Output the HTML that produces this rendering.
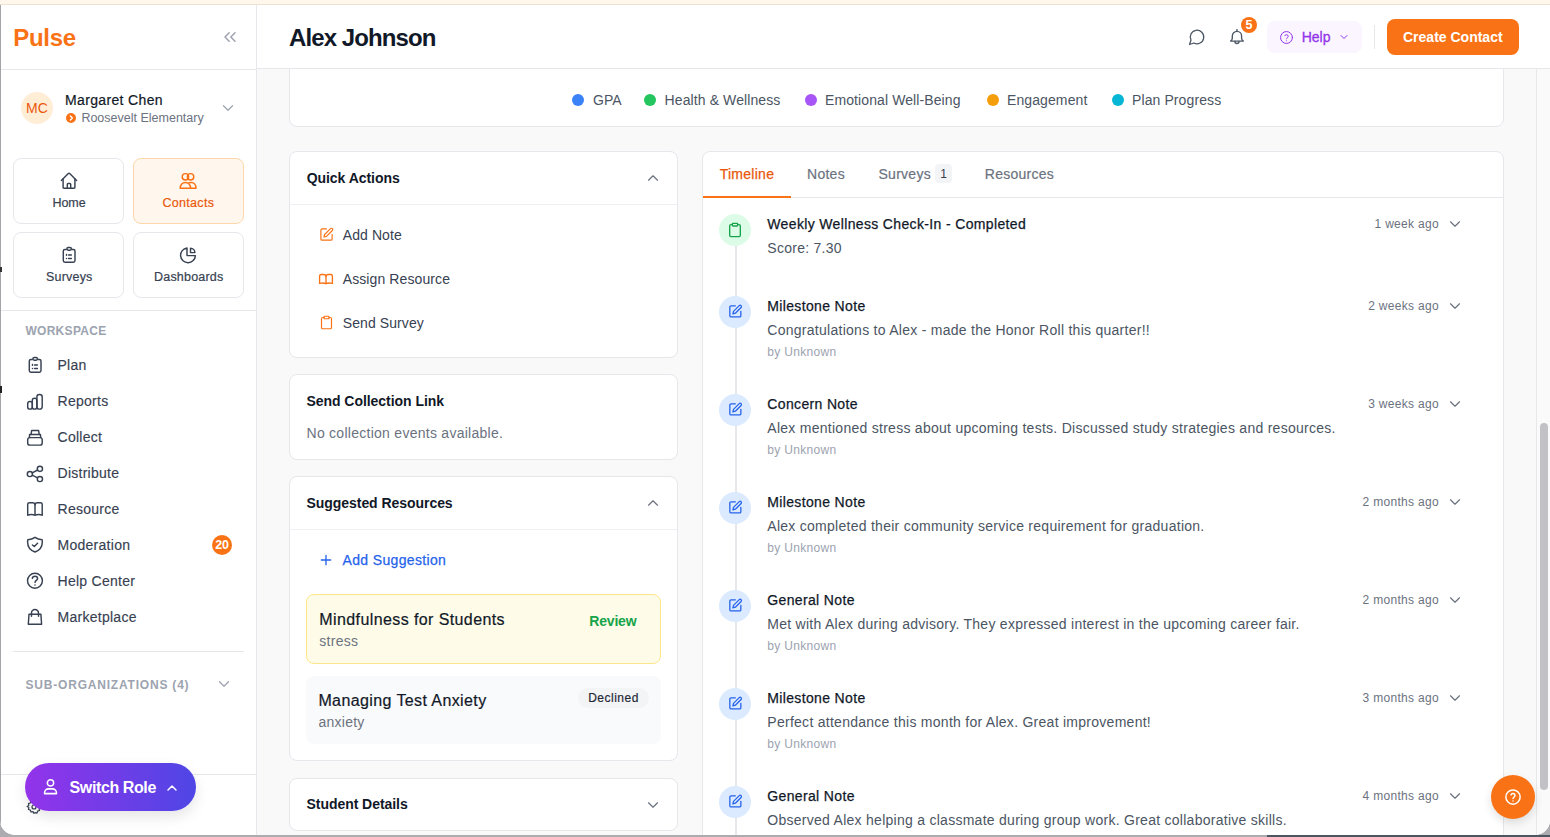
<!DOCTYPE html>
<html><head><meta charset="utf-8">
<style>
*{box-sizing:border-box;margin:0;padding:0}
html,body{width:1550px;height:837px;overflow:hidden}
body{background:#acacb0;font-family:"Liberation Sans",sans-serif;position:relative;color:#111827}
.a{position:absolute}
.t{position:absolute;white-space:nowrap;line-height:1}
svg{position:absolute;fill:none;stroke:currentColor;stroke-linecap:round;stroke-linejoin:round;overflow:visible}
#app{position:absolute;left:0;top:0;width:1550px;height:835px;background:#fff;border-radius:0 0 15px 15px;overflow:hidden}
.card{position:absolute;background:#fff;border:1px solid #e5e7eb;border-radius:8px}
.tile{position:absolute;border:1px solid #e5e7eb;border-radius:8px;background:#fff;width:111px;height:66px}
.circ{position:absolute;width:32px;height:32px;border-radius:16px;background:#dbeafe;left:719px}
</style></head><body>
<div id="app">
<div class="a" style="left:0px;top:0px;width:1550px;height:4px;background:#fff6ec;"></div>
<div class="a" style="left:0px;top:4px;width:1550px;height:1px;background:#ebe3d1;"></div>
<div class="a" style="left:257px;top:69px;width:1293px;height:766px;background:#f9f9fa;"></div>
<div class="card" style="left:289px;top:20px;width:1215px;height:107px"></div>
<div class="a" style="left:572px;top:94px;width:12px;height:12px;background:#3b82f6;border-radius:6px"></div>
<div class="t" style="left:592.9px;top:92.65px;font-size:14px;color:#4b5563;letter-spacing:0.1px;">GPA</div>
<div class="a" style="left:644px;top:94px;width:12px;height:12px;background:#22c55e;border-radius:6px"></div>
<div class="t" style="left:664.6px;top:92.65px;font-size:14px;color:#4b5563;letter-spacing:0.1px;">Health &amp; Wellness</div>
<div class="a" style="left:805px;top:94px;width:12px;height:12px;background:#a855f7;border-radius:6px"></div>
<div class="t" style="left:825px;top:92.65px;font-size:14px;color:#4b5563;letter-spacing:0.1px;">Emotional Well-Being</div>
<div class="a" style="left:987px;top:94px;width:12px;height:12px;background:#f59e0b;border-radius:6px"></div>
<div class="t" style="left:1007px;top:92.65px;font-size:14px;color:#4b5563;letter-spacing:0.1px;">Engagement</div>
<div class="a" style="left:1112px;top:94px;width:12px;height:12px;background:#06b6d4;border-radius:6px"></div>
<div class="t" style="left:1132px;top:92.65px;font-size:14px;color:#4b5563;letter-spacing:0.1px;">Plan Progress</div>
<div class="card" style="left:289px;top:151px;width:389px;height:207px"></div>
<div class="a" style="left:290px;top:204px;width:387px;height:1px;background:#eef0f3;"></div>
<div class="t" style="left:306.7px;top:170.95px;font-size:14px;color:#111827;font-weight:bold;letter-spacing:-0.05px;">Quick Actions</div>
<svg style="left:644.2px;top:168.5px;width:18px;height:18px;color:#6b7280;" viewBox="0 0 24 24" stroke-width="1.55"><path d="m18 15-6-6-6 6"/></svg>
<svg style="left:318.5px;top:226.8px;width:15px;height:15px;color:#f97316;" viewBox="0 0 24 24" stroke-width="1.9"><path d="M12 3H5a2 2 0 0 0-2 2v14a2 2 0 0 0 2 2h14a2 2 0 0 0 2-2v-7"/><path d="M18.375 2.625a2.121 2.121 0 1 1 3 3L12 15l-4 1 1-4Z"/></svg>
<div class="t" style="left:342.7px;top:228.35px;font-size:14px;color:#374151;letter-spacing:0.1px;">Add Note</div>
<svg style="left:310px;top:266px;width:32px;height:26px;color:#f97316" viewBox="310 266 32 26" stroke-width="1.35"><path d="M319.6 283.4V276C319.6 275.1 320.2 274.5 321.1 274.5H323.6C325 274.5 326 275.4 326 276.6V283.6"/><path d="M332.4 283.4V276C332.4 275.1 331.8 274.5 330.9 274.5H328.4C327 274.5 326 275.4 326 276.6"/><path d="M319.6 283.4C321.6 282.9 324.3 282.9 326 283.6C327.7 282.9 330.4 282.9 332.4 283.4"/></svg>
<div class="t" style="left:342.7px;top:272.35px;font-size:14px;color:#374151;letter-spacing:0.1px;">Assign Resource</div>
<svg style="left:318.5px;top:315.3px;width:15px;height:15px;color:#f97316;" viewBox="0 0 24 24" stroke-width="1.9"><rect x="8" y="2" width="8" height="4" rx="1"/><path d="M16 4h2a2 2 0 0 1 2 2v14a2 2 0 0 1-2 2H6a2 2 0 0 1-2-2V6a2 2 0 0 1 2-2h2"/></svg>
<div class="t" style="left:342.7px;top:316.35px;font-size:14px;color:#374151;letter-spacing:0.1px;">Send Survey</div>
<div class="card" style="left:289px;top:374px;width:389px;height:86px"></div>
<div class="t" style="left:306.5px;top:393.75px;font-size:14px;color:#111827;font-weight:bold;letter-spacing:-0.05px;">Send Collection Link</div>
<div class="t" style="left:306.5px;top:426.45px;font-size:14px;color:#6b7280;letter-spacing:0.27px;">No collection events available.</div>
<div class="card" style="left:289px;top:476px;width:389px;height:284.5px"></div>
<div class="a" style="left:290px;top:529px;width:387px;height:1px;background:#eef0f3;"></div>
<div class="t" style="left:306.5px;top:496.05px;font-size:14px;color:#111827;font-weight:bold;letter-spacing:-0.05px;">Suggested Resources</div>
<svg style="left:644.2px;top:493.8px;width:18px;height:18px;color:#6b7280;" viewBox="0 0 24 24" stroke-width="1.55"><path d="m18 15-6-6-6 6"/></svg>
<svg style="left:318px;top:552px;width:16px;height:16px;color:#2563eb;" viewBox="0 0 24 24" stroke-width="2"><path d="M12 5v14M5 12h14"/></svg>
<div class="t" style="left:342.5px;top:553.45px;font-size:14px;color:#2563eb;letter-spacing:0.35px;-webkit-text-stroke:0.25px #2563eb;">Add Suggestion</div>
<div class="a" style="left:306px;top:594px;width:355px;height:70px;background:#fefce8;border-radius:8px;border:1px solid #fde68a"></div>
<div class="t" style="left:319.3px;top:611.96px;font-size:16px;color:#111827;letter-spacing:0.4px;-webkit-text-stroke:0.2px #111827;">Mindfulness for Students</div>
<div class="t" style="left:319.3px;top:634.15px;font-size:14px;color:#6b7280;letter-spacing:0.27px;">stress</div>
<div class="t" style="left:589.3px;top:614.15px;font-size:14px;color:#16a34a;font-weight:bold;letter-spacing:-0.2px;">Review</div>
<div class="a" style="left:306px;top:676px;width:355px;height:67.5px;background:#f9fafb;border-radius:8px"></div>
<div class="t" style="left:318.4px;top:693.26px;font-size:16px;color:#111827;letter-spacing:0.4px;-webkit-text-stroke:0.2px #111827;">Managing Test Anxiety</div>
<div class="t" style="left:318.4px;top:715.15px;font-size:14px;color:#6b7280;letter-spacing:0.27px;">anxiety</div>
<div class="a" style="left:578px;top:688px;width:71px;height:20px;background:#f3f4f6;border-radius:10px"></div>
<div class="t" style="left:578.0px;width:71px;text-align:center;top:692.14px;font-size:12px;color:#1f2937;letter-spacing:0.5px;-webkit-text-stroke:0.2px #1f2937;">Declined</div>
<div class="card" style="left:289px;top:777.5px;width:389px;height:53px"></div>
<div class="t" style="left:306.5px;top:796.55px;font-size:14px;color:#111827;font-weight:bold;letter-spacing:-0.05px;">Student Details</div>
<svg style="left:644.2px;top:795.5px;width:18px;height:18px;color:#6b7280;" viewBox="0 0 24 24" stroke-width="1.55"><path d="m6 9 6 6 6-6"/></svg>
<div class="card" style="left:702px;top:151px;width:802px;height:720px"></div>
<div class="a" style="left:703px;top:197px;width:800px;height:1px;background:#e5e7eb;"></div>
<div class="a" style="left:703px;top:196px;width:88px;height:2px;background:#f97316;"></div>
<div class="t" style="left:719.7px;top:166.95px;font-size:14px;color:#ea580c;letter-spacing:0.27px;-webkit-text-stroke:0.25px #ea580c;">Timeline</div>
<div class="t" style="left:807px;top:166.95px;font-size:14px;color:#6b7280;letter-spacing:0.27px;-webkit-text-stroke:0.2px #6b7280;">Notes</div>
<div class="t" style="left:878.5px;top:166.95px;font-size:14px;color:#6b7280;letter-spacing:0.27px;-webkit-text-stroke:0.2px #6b7280;">Surveys</div>
<div class="a" style="left:935px;top:164px;width:17px;height:19px;background:#f3f4f6;border-radius:4px"></div>
<div class="t" style="left:935.0px;width:17px;text-align:center;top:167.84px;font-size:12px;color:#374151;">1</div>
<div class="t" style="left:984.8px;top:166.95px;font-size:14px;color:#6b7280;letter-spacing:0.27px;-webkit-text-stroke:0.2px #6b7280;">Resources</div>
<div class="a" style="left:734.5px;top:246px;width:2px;height:600px;background:#e5e7eb;"></div>
<div class="circ" style="top:214px;background:#dcfce7"></div>
<svg style="left:727px;top:221.8px;width:16px;height:16px;color:#16a34a;" viewBox="0 0 24 24" stroke-width="2"><rect x="8" y="2" width="8" height="4" rx="1"/><path d="M16 4h2a2 2 0 0 1 2 2v14a2 2 0 0 1-2 2H6a2 2 0 0 1-2-2V6a2 2 0 0 1 2-2h2"/></svg>
<div class="t" style="left:767.3px;top:217.15px;font-size:14px;color:#111827;letter-spacing:0.35px;-webkit-text-stroke:0.25px #111827;">Weekly Wellness Check-In - Completed</div>
<div class="t" style="left:767.3px;top:241.15px;font-size:14px;color:#4b5563;letter-spacing:0.27px;">Score: 7.30</div>
<div class="t" style="right:111px;top:218.34px;font-size:12px;color:#6b7280;letter-spacing:0.31px;">1 week ago</div>
<svg style="left:1446px;top:215.2px;width:18px;height:18px;color:#6b7280;" viewBox="0 0 24 24" stroke-width="1.55"><path d="m6 9 6 6 6-6"/></svg>
<div class="circ" style="top:296px"></div>
<svg style="left:727.9px;top:304.2px;width:14.7px;height:14.7px;color:#2563eb;" viewBox="0 0 24 24" stroke-width="2.1"><path d="M12 3H5a2 2 0 0 0-2 2v14a2 2 0 0 0 2 2h14a2 2 0 0 0 2-2v-7"/><path d="M18.375 2.625a2.121 2.121 0 1 1 3 3L12 15l-4 1 1-4Z"/></svg>
<div class="t" style="left:767.3px;top:299.15px;font-size:14px;color:#111827;letter-spacing:0.35px;-webkit-text-stroke:0.25px #111827;">Milestone Note</div>
<div class="t" style="left:767.3px;top:323.15px;font-size:14px;color:#4b5563;letter-spacing:0.27px;">Congratulations to Alex - made the Honor Roll this quarter!!</div>
<div class="t" style="left:767.3px;top:345.84px;font-size:12px;color:#9ca3af;letter-spacing:0.31px;">by Unknown</div>
<div class="t" style="right:111px;top:300.34px;font-size:12px;color:#6b7280;letter-spacing:0.31px;">2 weeks ago</div>
<svg style="left:1446px;top:297.2px;width:18px;height:18px;color:#6b7280;" viewBox="0 0 24 24" stroke-width="1.55"><path d="m6 9 6 6 6-6"/></svg>
<div class="circ" style="top:394px"></div>
<svg style="left:727.9px;top:402.2px;width:14.7px;height:14.7px;color:#2563eb;" viewBox="0 0 24 24" stroke-width="2.1"><path d="M12 3H5a2 2 0 0 0-2 2v14a2 2 0 0 0 2 2h14a2 2 0 0 0 2-2v-7"/><path d="M18.375 2.625a2.121 2.121 0 1 1 3 3L12 15l-4 1 1-4Z"/></svg>
<div class="t" style="left:767.3px;top:397.15px;font-size:14px;color:#111827;letter-spacing:0.35px;-webkit-text-stroke:0.25px #111827;">Concern Note</div>
<div class="t" style="left:767.3px;top:421.15px;font-size:14px;color:#4b5563;letter-spacing:0.27px;">Alex mentioned stress about upcoming tests. Discussed study strategies and resources.</div>
<div class="t" style="left:767.3px;top:443.84px;font-size:12px;color:#9ca3af;letter-spacing:0.31px;">by Unknown</div>
<div class="t" style="right:111px;top:398.34px;font-size:12px;color:#6b7280;letter-spacing:0.31px;">3 weeks ago</div>
<svg style="left:1446px;top:395.2px;width:18px;height:18px;color:#6b7280;" viewBox="0 0 24 24" stroke-width="1.55"><path d="m6 9 6 6 6-6"/></svg>
<div class="circ" style="top:492px"></div>
<svg style="left:727.9px;top:500.2px;width:14.7px;height:14.7px;color:#2563eb;" viewBox="0 0 24 24" stroke-width="2.1"><path d="M12 3H5a2 2 0 0 0-2 2v14a2 2 0 0 0 2 2h14a2 2 0 0 0 2-2v-7"/><path d="M18.375 2.625a2.121 2.121 0 1 1 3 3L12 15l-4 1 1-4Z"/></svg>
<div class="t" style="left:767.3px;top:495.15px;font-size:14px;color:#111827;letter-spacing:0.35px;-webkit-text-stroke:0.25px #111827;">Milestone Note</div>
<div class="t" style="left:767.3px;top:519.15px;font-size:14px;color:#4b5563;letter-spacing:0.27px;">Alex completed their community service requirement for graduation.</div>
<div class="t" style="left:767.3px;top:541.84px;font-size:12px;color:#9ca3af;letter-spacing:0.31px;">by Unknown</div>
<div class="t" style="right:111px;top:496.34px;font-size:12px;color:#6b7280;letter-spacing:0.31px;">2 months ago</div>
<svg style="left:1446px;top:493.2px;width:18px;height:18px;color:#6b7280;" viewBox="0 0 24 24" stroke-width="1.55"><path d="m6 9 6 6 6-6"/></svg>
<div class="circ" style="top:590px"></div>
<svg style="left:727.9px;top:598.2px;width:14.7px;height:14.7px;color:#2563eb;" viewBox="0 0 24 24" stroke-width="2.1"><path d="M12 3H5a2 2 0 0 0-2 2v14a2 2 0 0 0 2 2h14a2 2 0 0 0 2-2v-7"/><path d="M18.375 2.625a2.121 2.121 0 1 1 3 3L12 15l-4 1 1-4Z"/></svg>
<div class="t" style="left:767.3px;top:593.15px;font-size:14px;color:#111827;letter-spacing:0.35px;-webkit-text-stroke:0.25px #111827;">General Note</div>
<div class="t" style="left:767.3px;top:617.15px;font-size:14px;color:#4b5563;letter-spacing:0.27px;">Met with Alex during advisory. They expressed interest in the upcoming career fair.</div>
<div class="t" style="left:767.3px;top:639.84px;font-size:12px;color:#9ca3af;letter-spacing:0.31px;">by Unknown</div>
<div class="t" style="right:111px;top:594.34px;font-size:12px;color:#6b7280;letter-spacing:0.31px;">2 months ago</div>
<svg style="left:1446px;top:591.2px;width:18px;height:18px;color:#6b7280;" viewBox="0 0 24 24" stroke-width="1.55"><path d="m6 9 6 6 6-6"/></svg>
<div class="circ" style="top:688px"></div>
<svg style="left:727.9px;top:696.2px;width:14.7px;height:14.7px;color:#2563eb;" viewBox="0 0 24 24" stroke-width="2.1"><path d="M12 3H5a2 2 0 0 0-2 2v14a2 2 0 0 0 2 2h14a2 2 0 0 0 2-2v-7"/><path d="M18.375 2.625a2.121 2.121 0 1 1 3 3L12 15l-4 1 1-4Z"/></svg>
<div class="t" style="left:767.3px;top:691.15px;font-size:14px;color:#111827;letter-spacing:0.35px;-webkit-text-stroke:0.25px #111827;">Milestone Note</div>
<div class="t" style="left:767.3px;top:715.15px;font-size:14px;color:#4b5563;letter-spacing:0.27px;">Perfect attendance this month for Alex. Great improvement!</div>
<div class="t" style="left:767.3px;top:737.84px;font-size:12px;color:#9ca3af;letter-spacing:0.31px;">by Unknown</div>
<div class="t" style="right:111px;top:692.34px;font-size:12px;color:#6b7280;letter-spacing:0.31px;">3 months ago</div>
<svg style="left:1446px;top:689.2px;width:18px;height:18px;color:#6b7280;" viewBox="0 0 24 24" stroke-width="1.55"><path d="m6 9 6 6 6-6"/></svg>
<div class="circ" style="top:786px"></div>
<svg style="left:727.9px;top:794.2px;width:14.7px;height:14.7px;color:#2563eb;" viewBox="0 0 24 24" stroke-width="2.1"><path d="M12 3H5a2 2 0 0 0-2 2v14a2 2 0 0 0 2 2h14a2 2 0 0 0 2-2v-7"/><path d="M18.375 2.625a2.121 2.121 0 1 1 3 3L12 15l-4 1 1-4Z"/></svg>
<div class="t" style="left:767.3px;top:789.15px;font-size:14px;color:#111827;letter-spacing:0.35px;-webkit-text-stroke:0.25px #111827;">General Note</div>
<div class="t" style="left:767.3px;top:813.15px;font-size:14px;color:#4b5563;letter-spacing:0.27px;">Observed Alex helping a classmate during group work. Great collaborative skills.</div>
<div class="t" style="left:767.3px;top:835.84px;font-size:12px;color:#9ca3af;letter-spacing:0.31px;">by Unknown</div>
<div class="t" style="right:111px;top:790.34px;font-size:12px;color:#6b7280;letter-spacing:0.31px;">4 months ago</div>
<svg style="left:1446px;top:787.2px;width:18px;height:18px;color:#6b7280;" viewBox="0 0 24 24" stroke-width="1.55"><path d="m6 9 6 6 6-6"/></svg>
<div class="a" style="left:1536px;top:69px;width:14px;height:766px;background:#fafafa;border-left:1px solid #e8e8ea"></div>
<div class="a" style="left:1540px;top:423px;width:8px;height:367px;background:#c2c2c6;border-radius:4px"></div>
<div class="a" style="left:1491px;top:775px;width:44px;height:44px;background:#f97316;border-radius:22px;box-shadow:0 4px 10px rgba(0,0,0,.12)"></div>
<svg style="left:1504px;top:788px;width:18px;height:18px;color:#fff;" viewBox="0 0 24 24" stroke-width="2"><circle cx="12" cy="12" r="9.5"/><path d="M9.3 9.2a2.8 2.8 0 0 1 5.4.9c0 1.9-2.7 2.4-2.7 3.9"/><path d="M12 17.3h.01"/></svg>
<div class="a" style="left:257px;top:5px;width:1293px;height:63px;background:#fff;"></div>
<div class="a" style="left:257px;top:68px;width:1293px;height:1px;background:#e5e7eb;"></div>
<div class="t" style="left:289px;top:26.48px;font-size:24px;color:#111827;font-weight:bold;letter-spacing:-0.9px;">Alex Johnson</div>
<svg style="left:1188px;top:27.9px;width:18px;height:18px;color:#4b5563;" viewBox="0 0 24 24" stroke-width="1.7"><path d="M7.9 20A9 9 0 1 0 4 16.1L2 22Z"/></svg>
<svg style="left:1180px;top:15px;width:80px;height:40px;color:#4b5563" viewBox="1180 15 80 40" stroke-width="1.35"><path d="M1232.3 38.3V36A4.65 4.65 0 0 1 1241.6 36V38.3C1241.6 39.5 1242.3 40.4 1243.3 41.1H1230.6C1231.6 40.4 1232.3 39.5 1232.3 38.3Z"/><path d="M1236.95 31.3V29.6"/><path d="M1234.9 41.4A2.05 2.05 0 0 0 1239 41.4"/></svg>
<div class="a" style="left:1241px;top:17px;width:16px;height:16px;background:#f97316;border-radius:8px"></div>
<div class="t" style="left:1241.0px;width:16px;text-align:center;top:18.62px;font-size:12.5px;color:#fff;font-weight:bold;">5</div>
<div class="a" style="left:1267px;top:21px;width:95px;height:32px;background:#faf5ff;border-radius:8px"></div>
<svg style="left:1279px;top:30px;width:15px;height:15px;color:#9333ea;" viewBox="0 0 24 24" stroke-width="1.6"><circle cx="12" cy="12" r="9.5"/><path d="M9.3 9.2a2.8 2.8 0 0 1 5.4.9c0 1.9-2.7 2.4-2.7 3.9"/><path d="M12 17.3h.01"/></svg>
<div class="t" style="left:1301.7px;top:30.15px;font-size:14px;color:#9333ea;-webkit-text-stroke:0.3px #9333ea;">Help</div>
<svg style="left:1338px;top:31px;width:12px;height:12px;color:#9333ea;" viewBox="0 0 24 24" stroke-width="2"><path d="m6 9 6 6 6-6"/></svg>
<div class="a" style="left:1374px;top:25px;width:1px;height:24px;background:#e5e7eb;"></div>
<div class="a" style="left:1387px;top:19px;width:132px;height:36px;background:#f97316;border-radius:8px"></div>
<div class="t" style="left:1403px;top:30.15px;font-size:14px;color:#fff;font-weight:bold;">Create Contact</div>
<div class="a" style="left:0px;top:5px;width:257px;height:830px;background:#fff;border-right:1px solid #e5e7eb"></div>
<div class="t" style="left:13.3px;top:25.68px;font-size:24px;color:#f97316;font-weight:bold;letter-spacing:-0.3px;">Pulse</div>
<svg style="left:219.6px;top:26.8px;width:20px;height:20px;color:#9ca3af;" viewBox="0 0 24 24" stroke-width="1.8"><path d="m11 17-5-5 5-5"/><path d="m18 17-5-5 5-5"/></svg>
<div class="a" style="left:0px;top:69px;width:256px;height:1px;background:#e5e7eb;"></div>
<div class="a" style="left:21px;top:92px;width:32px;height:32px;background:#ffedd5;border-radius:16px"></div>
<div class="t" style="left:21.0px;width:32px;text-align:center;top:100.95px;font-size:14px;color:#ea580c;">MC</div>
<div class="t" style="left:65px;top:93.15px;font-size:14px;color:#111827;letter-spacing:0.35px;-webkit-text-stroke:0.2px #111827;">Margaret Chen</div>
<div class="a" style="left:66px;top:113px;width:10px;height:10px;background:#f97316;border-radius:5px"></div>
<svg style="left:66px;top:113px;width:10px;height:10px;color:#fff" viewBox="0 0 10 10" stroke-width="1.4"><path d="M4.4 3.1L6.3 5L4.4 6.9"/></svg>
<div class="t" style="left:81.4px;top:112.42px;font-size:12.5px;color:#6b7280;">Roosevelt Elementary</div>
<svg style="left:219px;top:99px;width:18px;height:18px;color:#9ca3af;" viewBox="0 0 24 24" stroke-width="1.6"><path d="m6 9 6 6 6-6"/></svg>
<div class="tile" style="left:13px;top:158px"></div>
<div class="tile" style="left:132.5px;top:158px;background:#fff7ed;border-color:#fed7aa"></div>
<div class="tile" style="left:13px;top:232px"></div>
<div class="tile" style="left:132.5px;top:232px"></div>
<svg style="left:52px;top:165px;width:32px;height:32px;color:#374151;" viewBox="0 0 32 32" stroke-width="1.45"><path d="M9.4 15.4L16.3 8.6a1 1 0 0 1 1.4 0L24.6 15.4"/><path d="M11.1 13.9V22.3a.9.9 0 0 0 .9.9H22a.9.9 0 0 0 .9-.9V13.9"/><path d="M15.3 23.2V19.3a.9.9 0 0 1 .9-.9h1.6a.9.9 0 0 1 .9.9V23.2"/></svg>
<div class="t" style="left:52.4px;top:196.72px;font-size:12.5px;color:#374151;-webkit-text-stroke:0.2px #374151;">Home</div>
<svg style="left:172px;top:165px;width:32px;height:32px;color:#f97316;" viewBox="0 0 32 32" stroke-width="1.45"><circle cx="13.4" cy="11.8" r="3.2"/><circle cx="18.6" cy="11.8" r="3.2"/><path d="M8.2 23.2C8.2 19.9 10.5 17.4 13.4 17.4C16.3 17.4 18.6 19.9 18.6 23.2Z"/><path d="M16.8 17.9C17.5 17.5 18.4 17.4 19.2 17.4C22 17.4 24 19.9 24 23.2H18.6"/></svg>
<div class="t" style="left:162.5px;top:196.72px;font-size:12.5px;color:#ea580c;letter-spacing:0.3px;-webkit-text-stroke:0.2px #ea580c;">Contacts</div>
<svg style="left:54px;top:240px;width:30px;height:30px;color:#374151;" viewBox="0 0 30 30" stroke-width="1.45"><path d="M12.2 9.5H10.9a1.6 1.6 0 0 0-1.6 1.6V20.6a1.6 1.6 0 0 0 1.6 1.6H19.4a1.6 1.6 0 0 0 1.6-1.6V11.1a1.6 1.6 0 0 0-1.6-1.6H18.1"/><rect x="12.9" y="7.5" width="4.5" height="2.7" rx="1.35"/><path d="M12.5 14.5V15.3M12.5 18.5h.01M14.6 14.9H17.4M14.6 18.5H17.4"/></svg>
<div class="t" style="left:46px;top:270.72px;font-size:12.5px;color:#374151;letter-spacing:0.2px;-webkit-text-stroke:0.2px #374151;">Surveys</div>
<svg style="left:172px;top:240px;width:32px;height:32px;color:#374151;" viewBox="0 0 32 32" stroke-width="1.45"><path d="M15 7.97V15.6H23.39A7.4 7.4 0 1 1 15 7.97Z"/><path d="M18.5 12.6V8.2A4.4 4.4 0 0 1 22.9 12.6Z"/></svg>
<div class="t" style="left:154px;top:270.72px;font-size:12.5px;color:#374151;letter-spacing:0.2px;-webkit-text-stroke:0.2px #374151;">Dashboards</div>
<div class="a" style="left:0px;top:310px;width:256px;height:1px;background:#e5e7eb;"></div>
<div class="t" style="left:25.4px;top:324.84px;font-size:12px;color:#9ca3af;font-weight:bold;letter-spacing:0.3px;">WORKSPACE</div>
<svg style="left:20px;top:350px;width:30px;height:30px;color:#374151;" viewBox="0 0 30 30" stroke-width="1.45"><path d="M12.2 9.5H10.9a1.6 1.6 0 0 0-1.6 1.6V20.6a1.6 1.6 0 0 0 1.6 1.6H19.4a1.6 1.6 0 0 0 1.6-1.6V11.1a1.6 1.6 0 0 0-1.6-1.6H18.1"/><rect x="12.9" y="7.5" width="4.5" height="2.7" rx="1.35"/><path d="M12.5 14.5V15.3M12.5 18.5h.01M14.6 14.9H17.4M14.6 18.5H17.4"/></svg>
<div class="t" style="left:57.5px;top:358.15px;font-size:14px;color:#374151;letter-spacing:0.27px;-webkit-text-stroke:0.15px #374151;">Plan</div>
<svg style="left:20px;top:386px;width:30px;height:30px;color:#374151;" viewBox="0 0 30 30" stroke-width="1.45"><rect x="7.7" y="15.4" width="4.6" height="7.7" rx="2.2"/><rect x="12.3" y="12.2" width="4.6" height="10.9" rx="2.2"/><rect x="16.9" y="8.4" width="5.3" height="14.7" rx="2.4"/></svg>
<div class="t" style="left:57.5px;top:394.15px;font-size:14px;color:#374151;letter-spacing:0.27px;-webkit-text-stroke:0.15px #374151;">Reports</div>
<svg style="left:20px;top:422px;width:30px;height:30px;color:#374151;" viewBox="0 0 30 30" stroke-width="1.45"><rect x="7.7" y="15.6" width="14.5" height="7.5" rx="2.2"/><path d="M9.4 15.5L9.6 12.4H20.4L20.7 15.5"/><path d="M11.1 12.4L11.6 8.5H18.6L19.2 12.4"/></svg>
<div class="t" style="left:57.5px;top:430.15px;font-size:14px;color:#374151;letter-spacing:0.27px;-webkit-text-stroke:0.15px #374151;">Collect</div>
<svg style="left:20px;top:458px;width:30px;height:30px;color:#374151;" viewBox="0 0 30 30" stroke-width="1.45"><circle cx="9.9" cy="16" r="2.6"/><circle cx="19.9" cy="10.8" r="2.6"/><circle cx="19.9" cy="21" r="2.6"/><path d="M12.2 14.8L17.6 12M12.2 17.2L17.6 19.8"/></svg>
<div class="t" style="left:57.5px;top:466.15px;font-size:14px;color:#374151;letter-spacing:0.27px;-webkit-text-stroke:0.15px #374151;">Distribute</div>
<svg style="left:20px;top:494px;width:30px;height:30px;color:#374151;" viewBox="0 0 30 30" stroke-width="1.45"><path d="M7.7 21V10.2C7.7 9.2 8.5 8.7 9.5 8.7H12.5C14 8.7 15 9.6 15 10.8V21.2"/><path d="M22.2 21V10.2C22.2 9.2 21.4 8.7 20.4 8.7H17.5C16 8.7 15 9.6 15 10.8"/><path d="M7.7 21C10 20.4 13 20.4 15 21.2C17 20.4 20 20.4 22.2 21"/></svg>
<div class="t" style="left:57.5px;top:502.15px;font-size:14px;color:#374151;letter-spacing:0.27px;-webkit-text-stroke:0.15px #374151;">Resource</div>
<svg style="left:20px;top:530px;width:30px;height:30px;color:#374151;" viewBox="0 0 30 30" stroke-width="1.45"><path d="M15 7.3C13 8.8 10.7 9.6 7.8 9.7C7.6 10.4 7.6 11.2 7.6 12C7.6 16.6 10.7 20.5 15 22C19.3 20.5 22.3 16.6 22.3 12C22.3 11.2 22.3 10.4 22.1 9.7C19.3 9.6 17 8.8 15 7.3Z"/><path d="M12.4 15L14.3 16.5L17.6 13.3"/></svg>
<div class="t" style="left:57.5px;top:538.15px;font-size:14px;color:#374151;letter-spacing:0.27px;-webkit-text-stroke:0.15px #374151;">Moderation</div>
<svg style="left:20px;top:566px;width:30px;height:30px;color:#374151;" viewBox="0 0 30 30" stroke-width="1.45"><circle cx="14.95" cy="14.7" r="7.45"/><path d="M12.3 12.4C12.5 11 13.6 10.2 15 10.2C16.5 10.2 17.6 11.2 17.6 12.5C17.6 14.3 15.1 14.5 15 16.4"/><path d="M15 19h.01"/></svg>
<div class="t" style="left:57.5px;top:574.15px;font-size:14px;color:#374151;letter-spacing:0.27px;-webkit-text-stroke:0.15px #374151;">Help Center</div>
<svg style="left:20px;top:602px;width:30px;height:30px;color:#374151;" viewBox="0 0 30 30" stroke-width="1.45"><path d="M9 12.3H20.9L21.6 22.2H8.3Z"/><path d="M11.5 14.3V11A3.5 3.5 0 0 1 18.5 11V14.3"/></svg>
<div class="t" style="left:57.5px;top:610.15px;font-size:14px;color:#374151;letter-spacing:0.27px;-webkit-text-stroke:0.15px #374151;">Marketplace</div>
<div class="a" style="left:212px;top:535px;width:20px;height:20px;background:#f97316;border-radius:10px"></div>
<div class="t" style="left:212.0px;width:20px;text-align:center;top:538.92px;font-size:12.5px;color:#fff;font-weight:bold;letter-spacing:-0.3px;">20</div>
<div class="a" style="left:13px;top:651px;width:231px;height:1px;background:#e5e7eb;"></div>
<div class="t" style="left:25.5px;top:678.84px;font-size:12px;color:#9ca3af;font-weight:bold;letter-spacing:0.8px;">SUB-ORGANIZATIONS (4)</div>
<svg style="left:215.2px;top:675.2px;width:18px;height:18px;color:#9ca3af;" viewBox="0 0 24 24" stroke-width="1.6"><path d="m6 9 6 6 6-6"/></svg>
<div class="a" style="left:0px;top:774px;width:256px;height:1px;background:#e5e7eb;"></div>
<svg style="left:26px;top:799px;width:16px;height:16px;color:#374151;" viewBox="0 0 24 24" stroke-width="1.8"><circle cx="12" cy="12" r="3"/><path d="M12 2.5l1.5 2.6 3-.6.9 2.9 2.9.9-.6 3 2.6 1.5-2.6 1.5.6 3-2.9.9-.9 2.9-3-.6L12 21.5l-1.5-2.6-3 .6-.9-2.9-2.9-.9.6-3L1.7 11.3 4.3 9.8l-.6-3 2.9-.9.9-2.9 3 .6z"/></svg>
<div class="a" style="left:25px;top:763px;width:171px;height:48px;background:linear-gradient(90deg,#9333ea,#4f46e5);border-radius:24px;box-shadow:0 6px 14px rgba(0,0,0,.10)"></div>
<svg style="left:40.8px;top:777px;width:19px;height:19px;color:#fff;" viewBox="0 0 24 24" stroke-width="1.9"><circle cx="12" cy="7.5" r="4"/><path d="M4.5 21v-1a5 5 0 0 1 5-5h5a5 5 0 0 1 5 5v1z"/></svg>
<div class="t" style="left:69.6px;top:780.26px;font-size:16px;color:#fff;font-weight:bold;letter-spacing:-0.4px;">Switch Role</div>
<svg style="left:164px;top:780px;width:16px;height:16px;color:#fff;" viewBox="0 0 24 24" stroke-width="2.2"><path d="m18 15-6-6-6 6"/></svg>
<div class="a" style="left:0px;top:5px;width:1px;height:830px;background:#a4a4a8;"></div>
<div class="a" style="left:0px;top:267px;width:2px;height:5px;background:#333;"></div>
<div class="a" style="left:0px;top:386px;width:2px;height:7px;background:#222;"></div>
</div>
<div class="a" style="left:1267px;top:835px;width:283px;height:2px;background:#4d5660"></div>
</body></html>
